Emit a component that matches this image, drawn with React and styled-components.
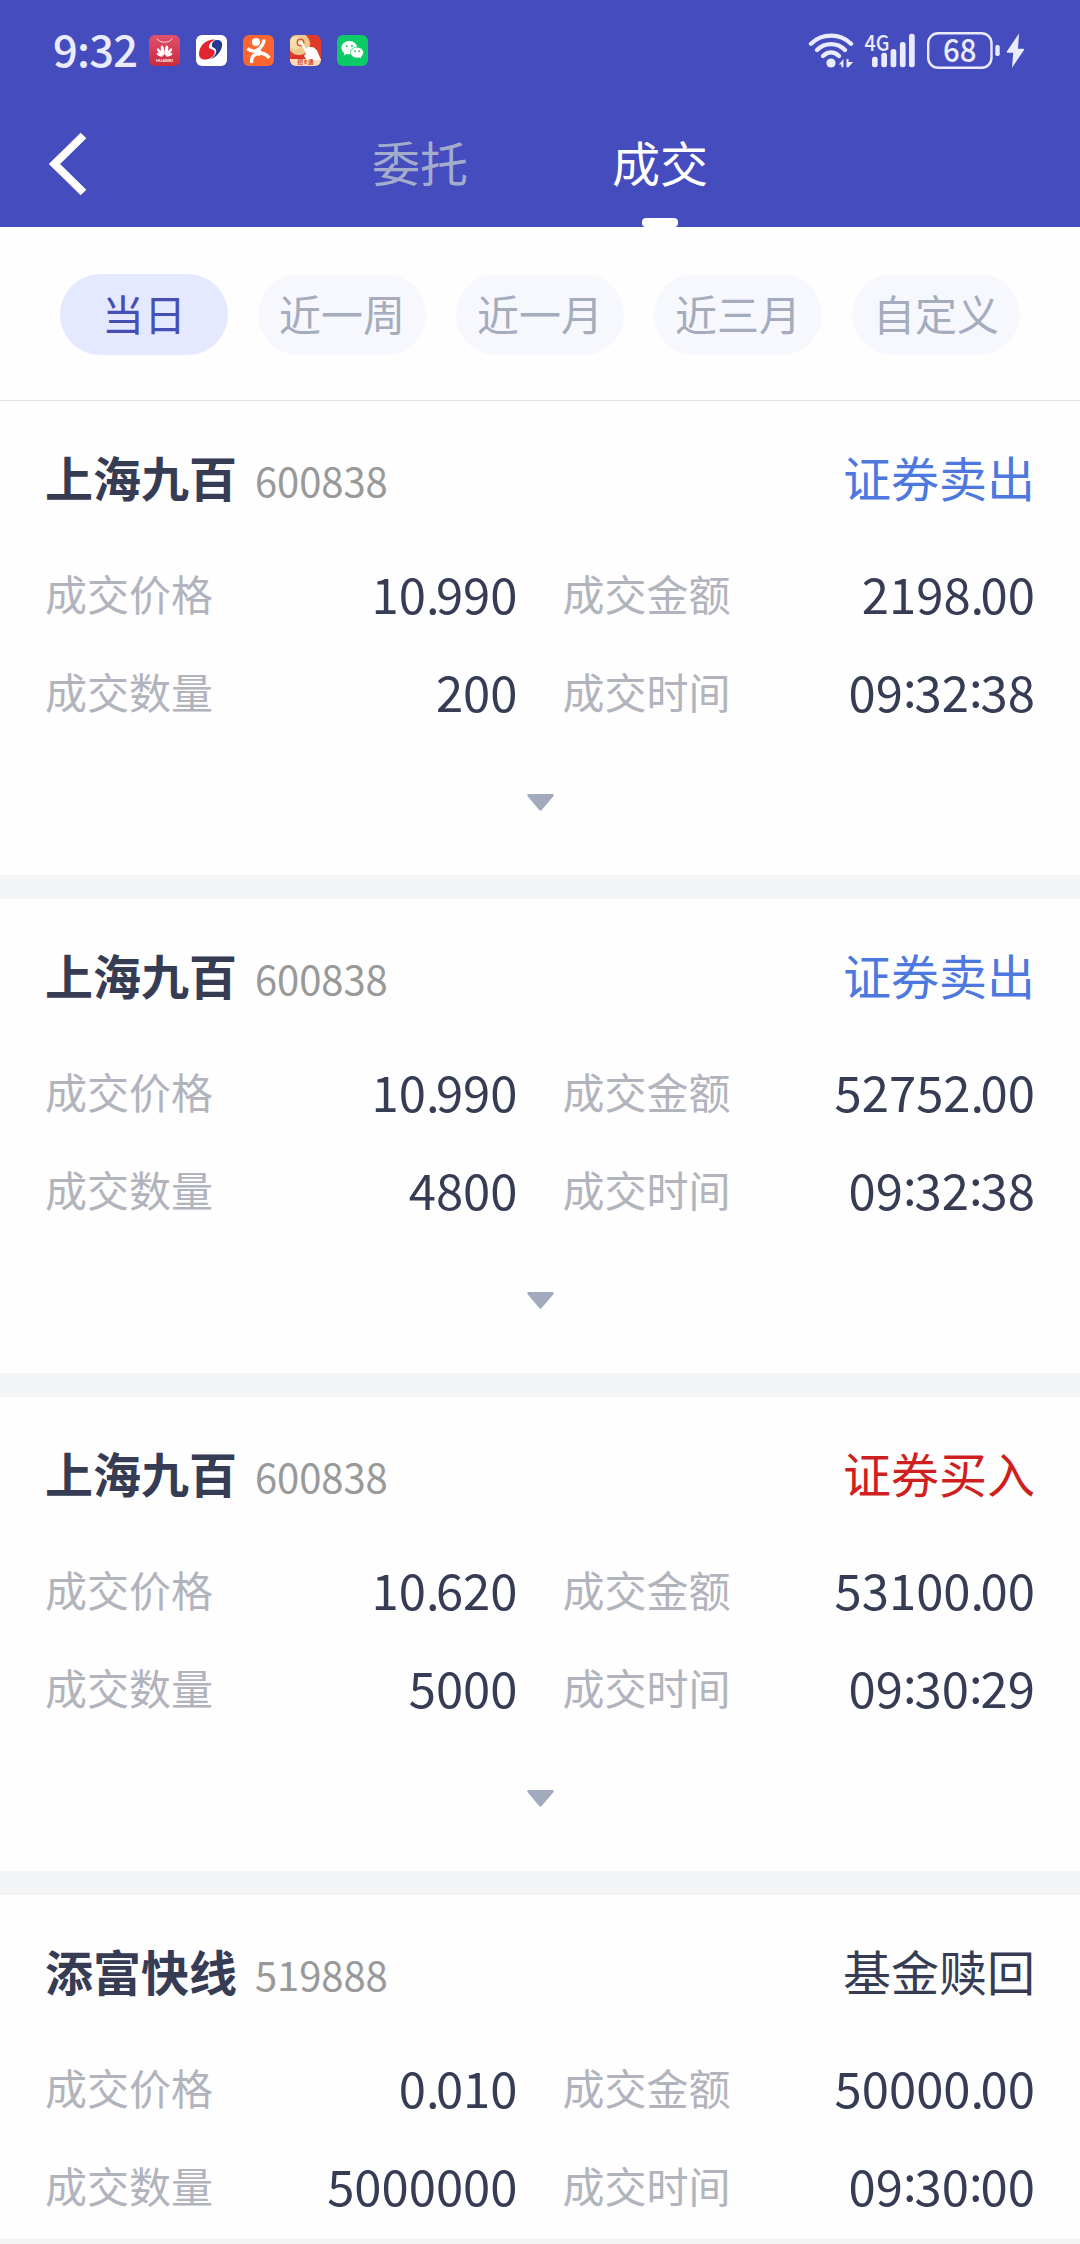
import React from "react";
import styled, { createGlobalStyle } from "styled-components";

const GlobalStyle = createGlobalStyle`
  * {
    box-sizing: border-box;
  }
  body {
    margin: 0;
    background: #fefefe;
    font-family: "Noto Sans CJK SC", "Noto Sans", sans-serif;
  }
`;

const Screen = styled.div`
  width: 1080px;
  height: 2244px;
  overflow: hidden;
  display: flex;
  flex-direction: column;
  background: #fefefe;
`;
const Header = styled.header`
  flex: none;
  height: 227px;
  display: flex;
  flex-direction: column;
  background: #444cbe;
`;
const StatusBar = styled.div`
  height: 101px;
  display: flex;
  align-items: center;
  justify-content: space-between;
  padding: 0 55px 0 53px;
`;
const StatusGroup = styled.div`
  display: flex;
  align-items: center;
`;
const Clock = styled.span`
  width: 84px;
  margin-right: 12px;
  padding-bottom: 3px;
  color: #ebebff;
  font-size: 43.5px;
  font-weight: 500;
  line-height: 92px;
  letter-spacing: -0.8px;
  white-space: nowrap;
`;
const AppIcons = styled.div`
  display: flex;
  gap: 16px;

  svg {
    display: block;
  }
`;
const NavBar = styled.nav`
  height: 126px;
  display: grid;
  grid-template-columns: 300px 480px 300px;
`;
const BackButton = styled.button`
  border: 0;
  padding: 0 0 0 45px;
  background: none;
  display: flex;
  align-items: center;
`;
const Tabs = styled.div`
  display: grid;
  grid-template-columns: 1fr 1fr;
`;
const Tab = styled.div`
  display: flex;
  flex-direction: column;
  align-items: center;
  justify-content: space-between;
  padding-top: 36px;
  font-size: 48px;
  line-height: 48px;
  color: ${({ $active }) => ($active ? "#ffffff" : "#a4accc")};
`;
const TabMarker = styled.div`
  width: 36px;
  height: 9px;
  border-radius: 4px;
  background: #ffffff;
`;
const Filters = styled.div`
  flex: none;
  height: 174px;
  display: flex;
  gap: 30px;
  padding: 47px 60px 0;
  border-bottom: 1px solid #e2e3e5;
`;
const Chip = styled.div`
  width: 168px;
  height: 81px;
  border-radius: 41px;
  font-size: 42px;
  line-height: 78px;
  text-align: center;
  white-space: nowrap;
  color: ${({ $active }) => ($active ? "#464fb3" : "#a4acbd")};
  background: ${({ $active }) => ($active ? "#e5e9ff" : "#f6f8fd")};
`;
const DealList = styled.main`
  height: 1838px;
  overflow: hidden;
`;
const BottomEdge = styled.div`
  flex: 1;
  background: #f3f3f4;
`;
const Card = styled.section`
  height: 498px;
  padding: 51px 45px 0;
  border-bottom: 24px solid #f3f4f6;
`;
const CardHead = styled.div`
  display: flex;
  align-items: baseline;
  height: 48px;
  margin-bottom: 44px;
  font-size: 48px;
  line-height: 48px;
`;
const StockName = styled.span`
  font-weight: 700;
  color: #363c54;
`;
const StockCode = styled.span`
  margin-left: 18px;
  font-size: 40px;
  letter-spacing: -0.1px;
  color: #999999;
`;
const Side = styled.span`
  margin-left: auto;
  color: ${({ $color }) => $color};
`;
const Fields = styled.div`
  display: grid;
  grid-template-columns: 1fr 1fr;
  column-gap: 45px;
`;
const Field = styled.div`
  display: flex;
  justify-content: space-between;
  height: 98px;
  line-height: 98px;
`;
const Label = styled.span`
  font-size: 42px;
  color: #b1b3bd;
`;
const Value = styled.span`
  font-size: 49px;
  color: #363c54;
`;
const Dot = styled.span`
  letter-spacing: -3.6px;
`;
const Colon = styled.span`
  letter-spacing: -2px;
  line-height: 1;
  vertical-align: 5px;
`;
const Expand = styled.div`
  display: flex;
  justify-content: center;
  padding-top: 54px;

  svg {
    display: block;
  }
`;

const SELL = "#4d78df";
const BUY = "#cf1f1f";
const NEUTRAL = "#363c54";

const filters = ["当日", "近一周", "近一月", "近三月", "自定义"];

const deals = [
  { name: "上海九百", code: "600838", side: "证券卖出", color: SELL, price: "10.990", amount: "2198.00", count: "200", time: "09:32:38" },
  { name: "上海九百", code: "600838", side: "证券卖出", color: SELL, price: "10.990", amount: "52752.00", count: "4800", time: "09:32:38" },
  { name: "上海九百", code: "600838", side: "证券买入", color: BUY, price: "10.620", amount: "53100.00", count: "5000", time: "09:30:29" },
  { name: "添富快线", code: "519888", side: "基金赎回", color: NEUTRAL, price: "0.010", amount: "50000.00", count: "5000000", time: "09:30:00" },
];

function NotificationIcons() {
  return (
    <AppIcons>
      <svg width="31" height="31" viewBox="0 0 31 31">
        <defs>
          <linearGradient id="hw" x1="0" y1="0" x2="0" y2="1">
            <stop offset="0" stopColor="#e0506e" />
            <stop offset="1" stopColor="#cb2b3c" />
          </linearGradient>
        </defs>
        <rect width="31" height="31" rx="6" fill="url(#hw)" />
        <path d="M8 3.500C10 8.500 21 8.500 23 3.500" fill="none" stroke="#fbd5da" strokeWidth="1" />
        <g fill="#ffffff">
          <ellipse cx="13.600" cy="15.500" rx="1.700" ry="5" transform="rotate(-8 13.600 15.500)" />
          <ellipse cx="17.400" cy="15.500" rx="1.700" ry="5" transform="rotate(8 17.400 15.500)" />
          <ellipse cx="10.800" cy="17" rx="1.500" ry="4.400" transform="rotate(-35 10.800 17)" />
          <ellipse cx="20.200" cy="17" rx="1.500" ry="4.400" transform="rotate(35 20.200 17)" />
          <ellipse cx="10.600" cy="19.800" rx="1.200" ry="3.400" transform="rotate(-66 10.600 19.800)" />
          <ellipse cx="20.400" cy="19.800" rx="1.200" ry="3.400" transform="rotate(66 20.400 19.800)" />
        </g>
        <text x="15.500" y="27.300" textAnchor="middle" fontSize="4.300" fontWeight="700" textLength="17" fill="#ffe9ea" fontFamily="Liberation Sans, sans-serif">HUAWEI</text>
      </svg>
      <svg width="31" height="31" viewBox="0 0 31 31">
        <rect width="31" height="31" rx="6" fill="#ffffff" />
        <path d="M19 4.500C10 4 3 11 3 19c0 4.500 4 6.300 8.500 5.200 5-1.200 8-5 7-8-.8-2.300-5-1.500-5.500-3.700C12.500 9 16 6 19 4.500Z" fill="#e3242f" />
        <path d="M18.500 5.500c4.500-1.500 7.800.5 7.600 4.500C26 16 20 22.500 14 24.600c5-3.600 7.600-7.500 5.500-10.500-1.200-1.700-4-1.500-3.700-4.100.2-1.800 1.200-3.500 2.700-4.500Z" fill="#253a90" />
      </svg>
      <svg width="31" height="31" viewBox="0 0 31 31">
        <rect width="31" height="31" rx="6" fill="#fb6630" />
        <circle cx="13" cy="7" r="4" fill="#ffffff" />
        <g fill="none" stroke="#ffffff" strokeWidth="3.300">
          <path d="M4.500 13.500C8 17 13 17 16.500 13.500S21 8 21 4.500" />
          <path d="M8.700 28C8 21.500 11.500 18.800 16 18.300 21 17.800 24 20 26.300 23" />
          <path d="M14 15l4 4.500" strokeWidth="5" />
        </g>
      </svg>
      <svg width="31" height="31" viewBox="0 0 31 31">
        <defs>
          <clipPath id="promo">
            <rect width="31" height="31" rx="6" />
          </clipPath>
        </defs>
        <g clipPath="url(#promo)">
          <rect width="31" height="31" fill="#df3b2a" />
          <circle cx="9" cy="9" r="11" fill="#edc98c" />
          <circle cx="6" cy="8" r="6.500" fill="#f6dda9" />
          <path d="M2 20l8 1 5 4H2Z" fill="#d93427" />
          <rect y="24" width="31" height="7" fill="#fbd9b4" />
          <circle cx="10.500" cy="7.500" r="3.300" fill="none" stroke="#d2502f" strokeWidth="1.300" />
          <path d="M10 7.500c1-1.500 2.600-1 3.300.5l2.700 6 2-2.300 5.500.5 3.500 3.300L31 25H17l-3-4 2-3Z" fill="#ffffff" />
          <text x="15.500" y="29.300" textAnchor="middle" fontSize="5.500" fontWeight="700" textLength="16" fill="#d2402c">招e通</text>
        </g>
      </svg>
      <svg width="31" height="31" viewBox="0 0 31 31">
        <rect width="31" height="31" rx="6" fill="#0ccb66" />
        <path d="M12.300 6C7.900 6 4.500 9 4.500 12.700c0 2.100 1.100 4 2.800 5.200l-.6 2.500 2.800-1.500c1 .3 1.900.4 2.900.4 4.400 0 7.900-3 7.900-6.600S16.700 6 12.300 6Z" fill="#ffffff" />
        <path d="M20 12.200c-3.700 0-6.500 2.400-6.500 5.400s2.900 5.500 6.500 5.500c.8 0 1.600-.1 2.300-.3l2.300 1.300-.5-2.100c1.500-1 2.400-2.600 2.400-4.400 0-3-2.800-5.400-6.500-5.400Z" fill="#ffffff" stroke="#0ccb66" strokeWidth=".8" />
        <g fill="#0ccb66">
          <circle cx="9.700" cy="11" r="1" />
          <circle cx="15" cy="11" r="1" />
          <circle cx="18" cy="16.200" r=".9" />
          <circle cx="22.300" cy="16.200" r=".9" />
        </g>
      </svg>
    </AppIcons>
  );
}

function SystemIcons() {
  return (
    <svg width="217" height="70" viewBox="808 16 217 70" fill="#ebebff">
      <g fill="none" stroke="#ebebff" strokeWidth="4.400" strokeLinecap="round">
        <path d="M811 43.700C822 32.900 840 32.900 851 43.700" />
        <path d="M817 50C825 42.200 837 42.200 845 50" />
        <path d="M823 56C828 51.200 834 51.200 839 56" />
      </g>
      <circle cx="831" cy="63" r="4.600" />
      <path d="M838.800 64.500l4.600-5.500v8.300h-2v-2.800ZM846.500 59h2v3h4.600l-4.600 5.300h-2Z" />
      <text x="864.500" y="50.500" fontSize="22" fontWeight="500" textLength="25" lengthAdjust="spacingAndGlyphs">4G</text>
      <rect x="872" y="56.700" width="5.700" height="10.600" rx="2.500" />
      <rect x="881.300" y="52.700" width="5.700" height="14.600" rx="2.500" />
      <rect x="890.600" y="49" width="5.700" height="18.300" rx="2.500" />
      <rect x="899.900" y="42" width="5.700" height="25.300" rx="2.500" />
      <rect x="909" y="33.700" width="5.700" height="33.600" rx="2.500" />
      <rect x="928.200" y="33.200" width="63.300" height="34.600" rx="10" fill="none" stroke="#ebebff" strokeWidth="2.400" />
      <text x="943" y="62" fontSize="32" fontWeight="500" textLength="33.500" lengthAdjust="spacingAndGlyphs">68</text>
      <rect x="995.300" y="45" width="4.400" height="11" rx="1.800" />
      <path d="M1019 33.500L1006.800 51.500q-.5 1.200.8 1.200h5.600L1012 67.800 1024 50q.7-1.300-.8-1.300h-5.200Z" />
    </svg>
  );
}

// "." and ":" are set tighter than the digits, and ":" is raised to their middle
function Figure({ text }) {
  return (
    <Value>
      {text.split(/([.:])/).map((part, i) => {
        if (part === ".") return <Dot key={i}>.</Dot>;
        if (part === ":") return <Colon key={i}>:</Colon>;
        return part;
      })}
    </Value>
  );
}

function Deal({ deal: { name, code, side, color, price, amount, count, time } }) {
  const fields = [
    ["成交价格", price],
    ["成交金额", amount],
    ["成交数量", count],
    ["成交时间", time],
  ];

  return (
    <Card>
      <CardHead>
        <StockName>{name}</StockName>
        <StockCode>{code}</StockCode>
        <Side $color={color}>{side}</Side>
      </CardHead>
      <Fields>
        {fields.map(([label, value]) => (
          <Field key={label}>
            <Label>{label}</Label>
            <Figure text={value} />
          </Field>
        ))}
      </Fields>
      <Expand>
        <svg width="27" height="17" viewBox="0 0 27 17">
          <path d="M1.500 0h24q2 .6.900 2.200L14.700 16q-1.200 1.500-2.400 0L.6 2.200Q-.5.600 1.500 0Z" fill="#a2abbe" />
        </svg>
      </Expand>
    </Card>
  );
}

function App() {
  return (
    <Screen>
      <GlobalStyle />
      <Header>
        <StatusBar>
          <StatusGroup>
            <Clock>9:32</Clock>
            <NotificationIcons />
          </StatusGroup>
          <SystemIcons />
        </StatusBar>
        <NavBar>
          <BackButton aria-label="返回">
            <svg width="44" height="66" viewBox="0 0 44 66">
              <path d="M38.500 4.500L9.500 33l29 28.500" fill="none" stroke="#ffffff" strokeWidth="8" />
            </svg>
          </BackButton>
          <Tabs>
            <Tab>委托</Tab>
            <Tab $active>
              成交
              <TabMarker />
            </Tab>
          </Tabs>
        </NavBar>
      </Header>
      <Filters>
        {filters.map((label, i) => (
          <Chip key={label} $active={i === 0}>{label}</Chip>
        ))}
      </Filters>
      <DealList>
        {deals.map((deal, i) => (
          <Deal key={i} deal={deal} />
        ))}
      </DealList>
      <BottomEdge />
    </Screen>
  );
}

export default App;
